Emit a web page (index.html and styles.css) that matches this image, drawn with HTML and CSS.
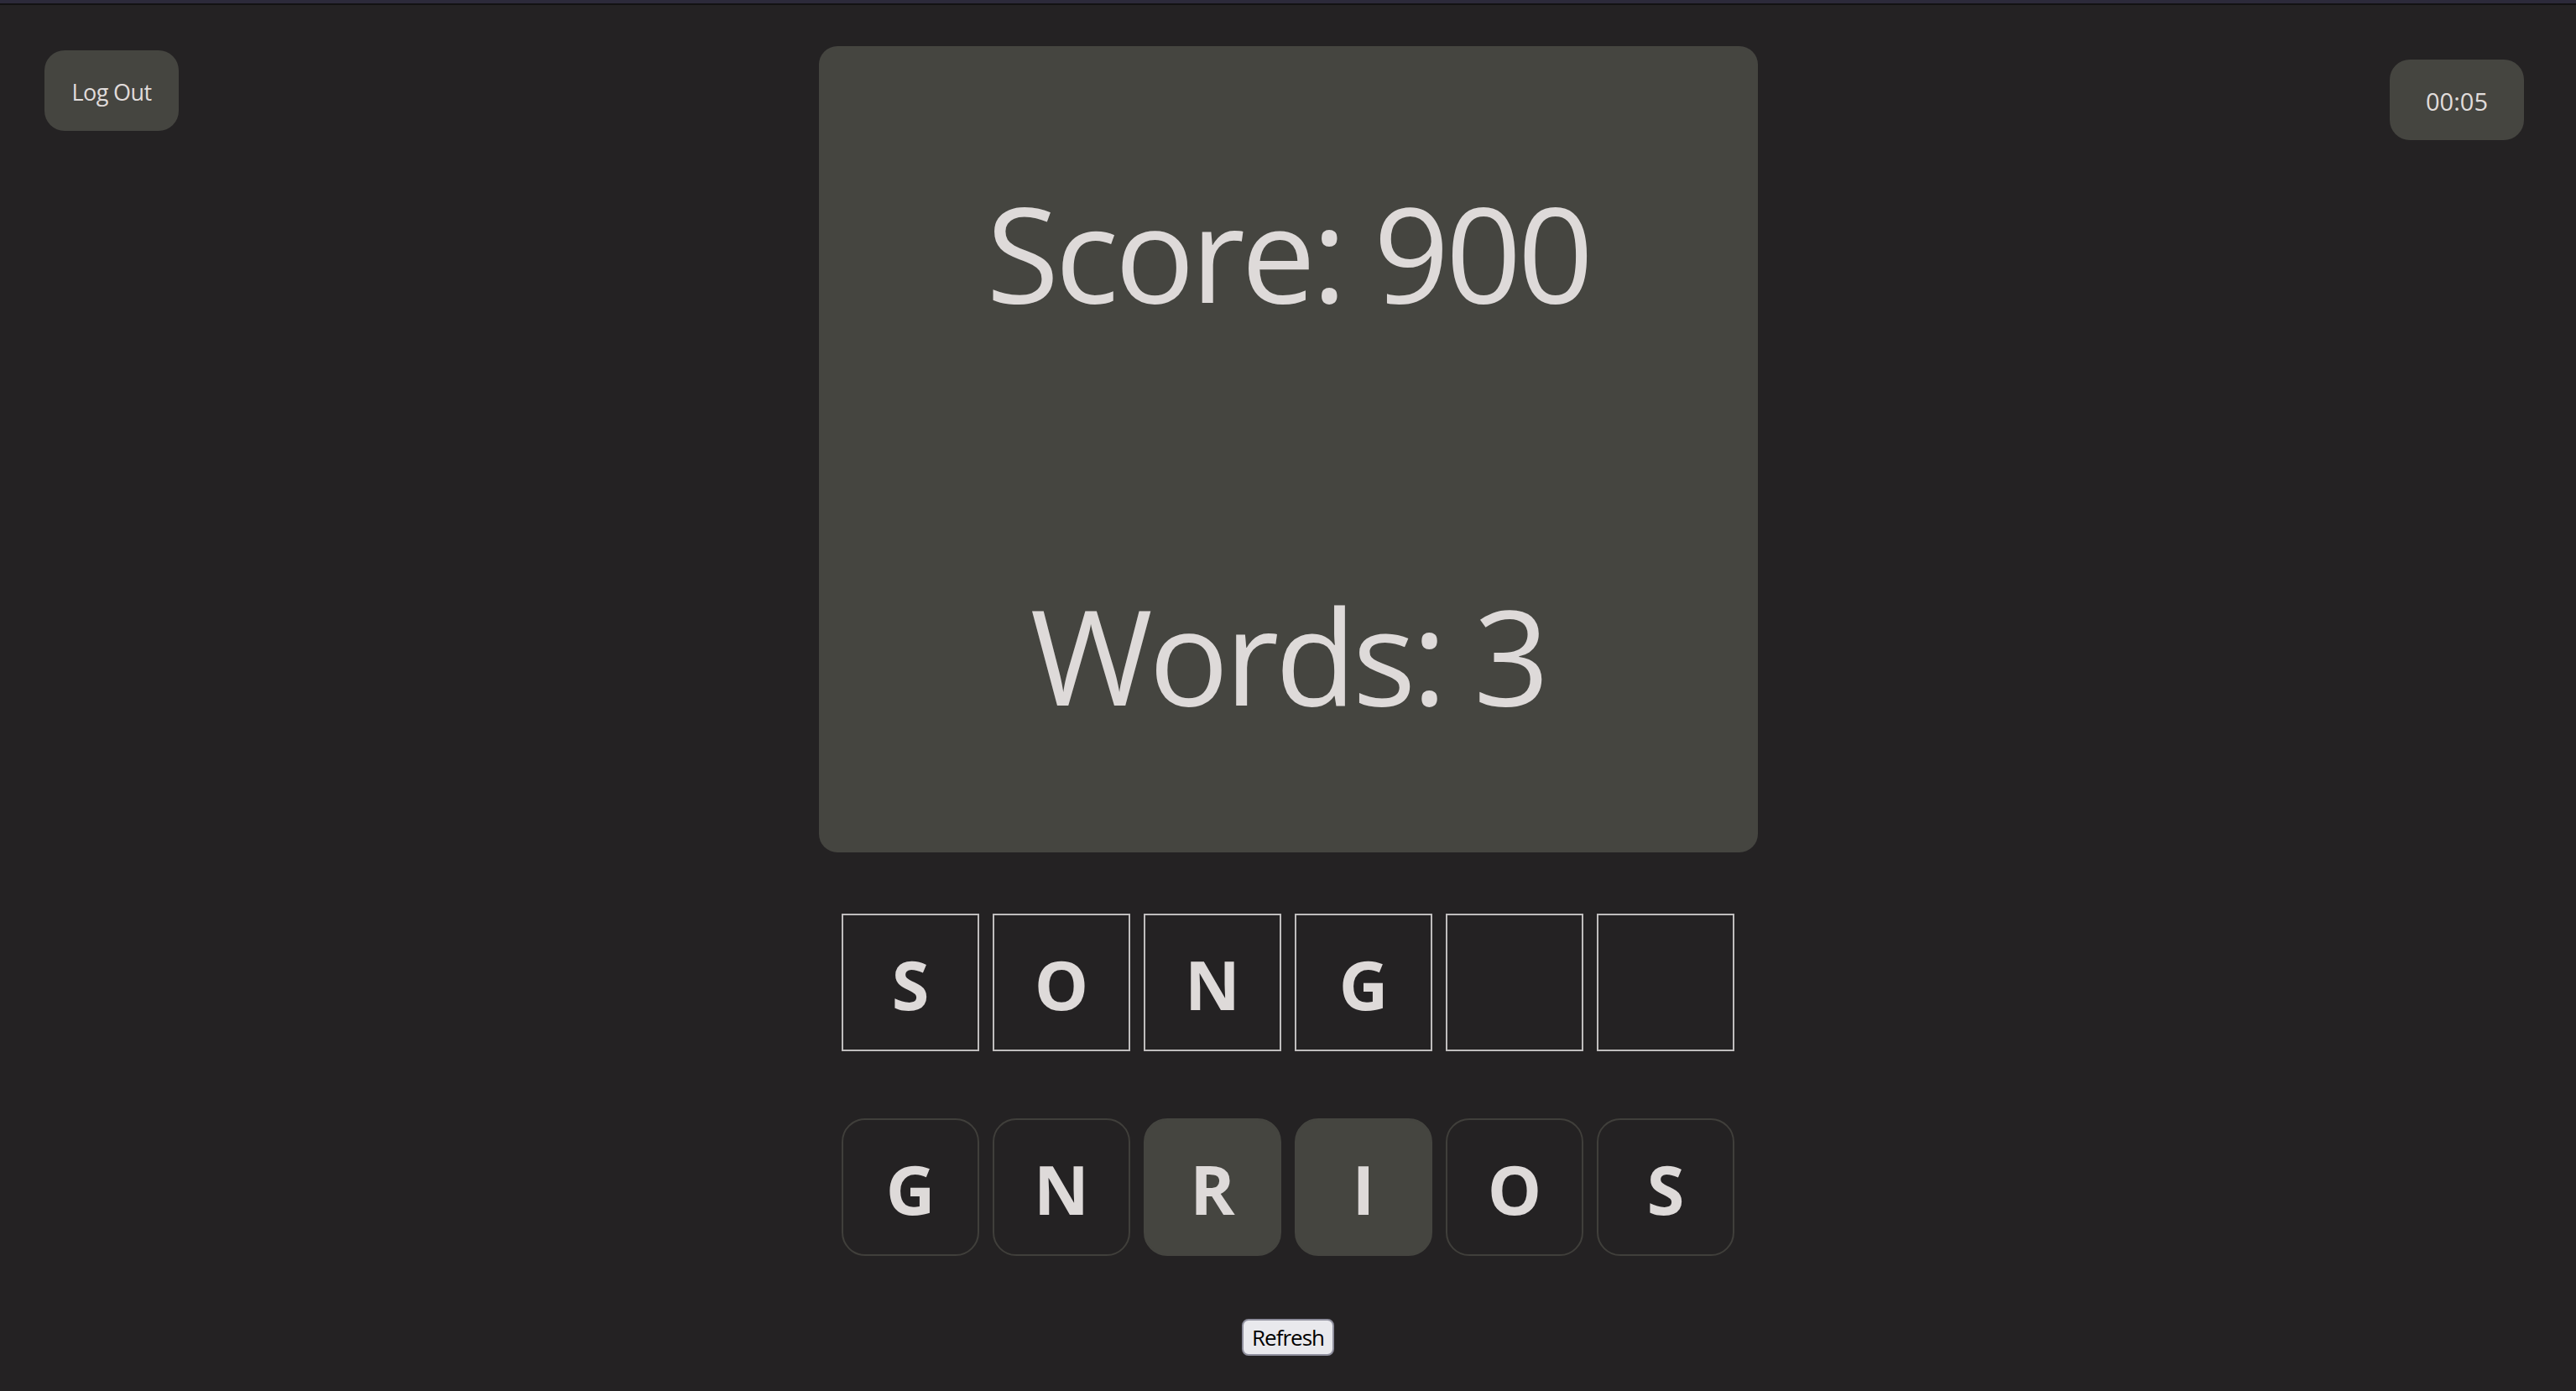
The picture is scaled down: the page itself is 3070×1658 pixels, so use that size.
FILE: index.html
```html
<!DOCTYPE html>
<html lang="en">
<head>
<meta charset="utf-8">
<title>Word Game</title>
<link rel="stylesheet" href="styles.css">
</head>
<body>
<div class="topbar"></div>
<main class="page">
  <div class="header">
    <div class="left"><button class="pill logout">Log Out</button></div>
    <section class="card">
      <h1 class="stat">Score: 900</h1>
      <h1 class="stat">Words: 3</h1>
    </section>
    <div class="right"><div class="pill timer">00:05</div></div>
  </div>
  <div class="row guess">
    <div class="tile slot">S</div>
    <div class="tile slot">O</div>
    <div class="tile slot">N</div>
    <div class="tile slot">G</div>
    <div class="tile slot"></div>
    <div class="tile slot"></div>
  </div>
  <div class="row letters">
    <div class="tile key">G</div>
    <div class="tile key">N</div>
    <div class="tile key used">R</div>
    <div class="tile key used">I</div>
    <div class="tile key">O</div>
    <div class="tile key">S</div>
  </div>
  <div class="actions"><button class="refresh">Refresh</button></div>
</main>
</body>
</html>
```
FILE: styles.css
```css
html, body {
  margin: 0;
  padding: 0;
}
body {
  background: #242223;
  color: #dedad9;
  font-family: "Open Sans", "Noto Sans", sans-serif;
  min-height: 1658px;
}
.topbar {
  height: 4px;
  background: #2c2a3a;
  border-bottom: 2px solid #131213;
}
.page {
  display: flex;
  flex-direction: column;
}
.header {
  display: grid;
  grid-template-columns: 1fr 1119px 1fr;
  align-items: start;
}
.left {
  display: flex;
  justify-content: flex-start;
  padding: 54px 0 0 53px;
}
.right {
  display: flex;
  justify-content: flex-end;
  padding: 65px 62px 0 0;
}
.pill {
  box-sizing: border-box;
  width: 160px;
  height: 96px;
  border: none;
  border-radius: 24px;
  background: #454540;
  color: #e0dcdb;
  font-family: "Open Sans", "Noto Sans", sans-serif;
  display: flex;
  align-items: center;
  justify-content: center;
  padding: 0;
}
.logout {
  font-size: 27px;
  letter-spacing: -0.6px;
  padding-top: 2px;
}
.timer {
  font-size: 29px;
  padding-top: 2px;
}
.card {
  margin-top: 49px;
  box-sizing: border-box;
  height: 961px;
  background: #454540;
  border-radius: 22px;
  display: flex;
  flex-direction: column;
  align-items: center;
  padding: 164px 0 0;
  gap: 319px;
}
.stat {
  margin: 0;
  font-weight: 400;
  font-size: 158px;
  line-height: 161px;
  letter-spacing: -4.5px;
  color: #dedad9;
  white-space: nowrap;
}
.row {
  display: flex;
  justify-content: center;
  gap: 16px;
}
.guess {
  margin-top: 73px;
}
.letters {
  margin-top: 80px;
}
.tile {
  box-sizing: border-box;
  width: 164px;
  height: 164px;
  display: flex;
  align-items: center;
  justify-content: center;
  font-weight: 700;
  font-size: 81px;
  line-height: 81px;
  padding-top: 2px;
  color: #dedad9;
}
.slot {
  border: 2px solid #bfbdbd;
}
.key {
  border: 2px solid #403f3b;
  border-radius: 28px;
}
.key.used {
  background: #454540;
  border-color: #454540;
}
.actions {
  display: flex;
  justify-content: center;
  margin-top: 75px;
}
.refresh {
  box-sizing: border-box;
  height: 44px;
  padding: 0 10px;
  font-family: "Open Sans", "Noto Sans", sans-serif;
  font-size: 26px;
  letter-spacing: -1px;
  color: #000;
  background: #e9e9ed;
  border: 2px solid #8f8f9d;
  border-radius: 8px;
  display: flex;
  align-items: center;
}
```
